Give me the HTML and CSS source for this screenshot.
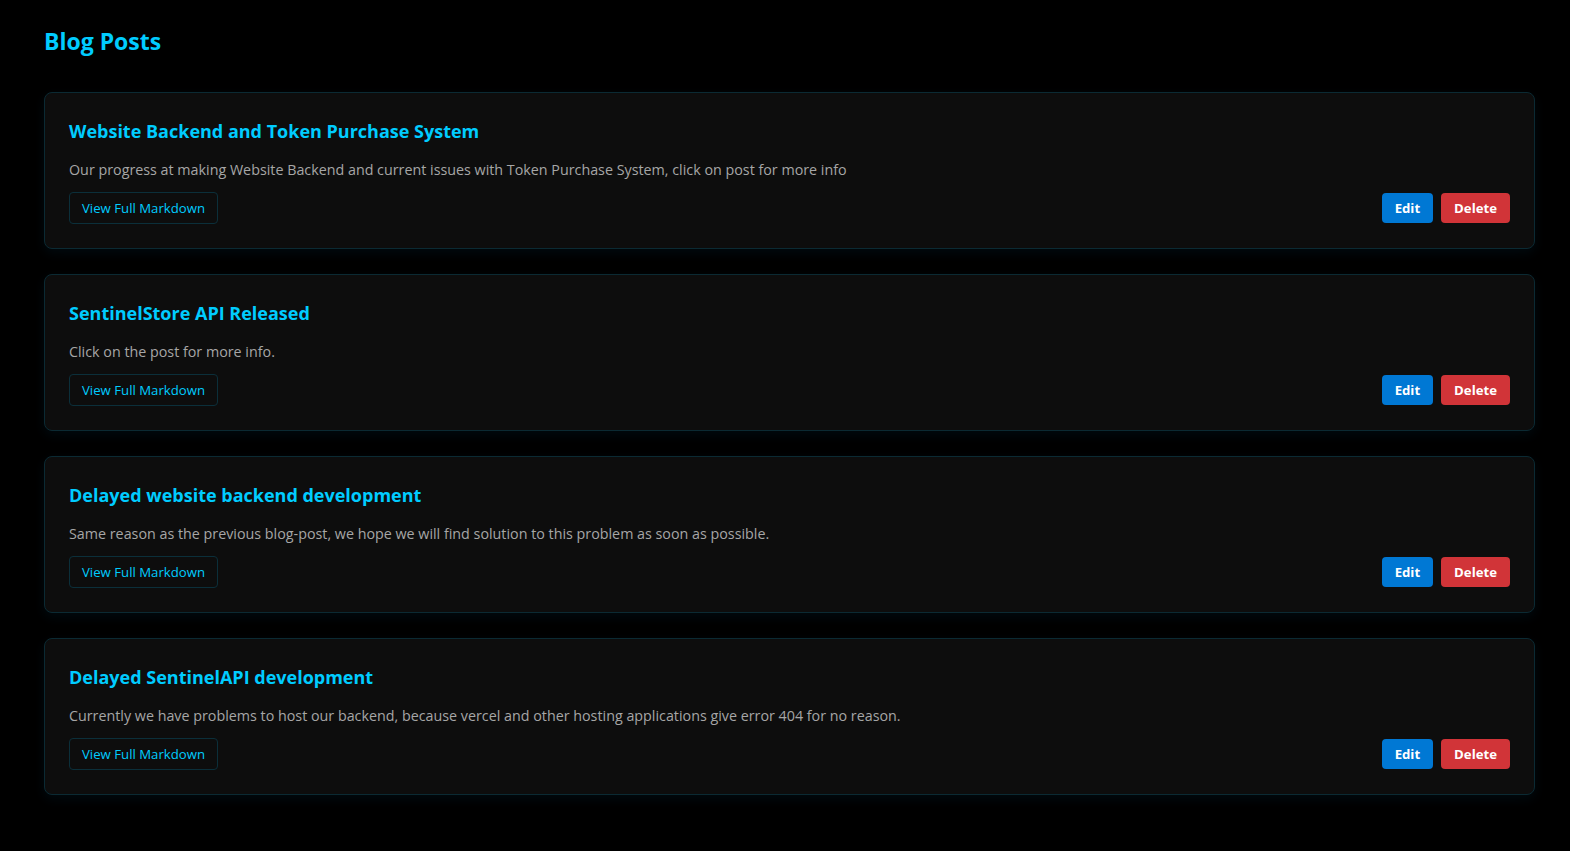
FILE: index.html
```html
<!DOCTYPE html>
<html lang="en">
<head>
<meta charset="utf-8">
<title>Blog Posts</title>
<link rel="stylesheet" href="styles.css">
</head>
<body>
<main class="page">
  <h1 class="page-title">Blog Posts</h1>
  <section class="posts">
    <article class="card">
      <h2 class="card-title">Website Backend and Token Purchase System</h2>
      <p class="card-desc">Our progress at making Website Backend and current issues with Token Purchase System, click on post for more info</p>
      <div class="card-actions">
        <button class="btn btn-outline">View Full Markdown</button>
        <div class="card-admin">
          <button class="btn btn-edit">Edit</button>
          <button class="btn btn-delete">Delete</button>
        </div>
      </div>
    </article>
    <article class="card">
      <h2 class="card-title">SentinelStore API Released</h2>
      <p class="card-desc">Click on the post for more info.</p>
      <div class="card-actions">
        <button class="btn btn-outline">View Full Markdown</button>
        <div class="card-admin">
          <button class="btn btn-edit">Edit</button>
          <button class="btn btn-delete">Delete</button>
        </div>
      </div>
    </article>
    <article class="card">
      <h2 class="card-title">Delayed website backend development</h2>
      <p class="card-desc">Same reason as the previous blog-post, we hope we will find solution to this problem as soon as possible.</p>
      <div class="card-actions">
        <button class="btn btn-outline">View Full Markdown</button>
        <div class="card-admin">
          <button class="btn btn-edit">Edit</button>
          <button class="btn btn-delete">Delete</button>
        </div>
      </div>
    </article>
    <article class="card">
      <h2 class="card-title">Delayed SentinelAPI development</h2>
      <p class="card-desc">Currently we have problems to host our backend, because vercel and other hosting applications give error 404 for no reason.</p>
      <div class="card-actions">
        <button class="btn btn-outline">View Full Markdown</button>
        <div class="card-admin">
          <button class="btn btn-edit">Edit</button>
          <button class="btn btn-delete">Delete</button>
        </div>
      </div>
    </article>
  </section>
</main>
</body>
</html>
```

FILE: styles.css
```css
* { box-sizing: border-box; }
html, body {
  margin: 0;
  background: #000;
}
body {
  font-family: "Open Sans", "Noto Sans", sans-serif;
  color: #aaa;
}
.page {
  padding: 25px 35px 40px 44px;
}
.page-title {
  margin: 0 0 35px;
  font-size: 23px;
  line-height: 32px;
  font-weight: 700;
  color: #00ccff;
}
.posts {
  display: flex;
  flex-direction: column;
  gap: 25px;
}
.card {
  background: #0d0d0d;
  border: 1px solid #0b2a33;
  border-radius: 8px;
  padding: 24px 24px 24px 24px;
  box-shadow: 0 4px 12px rgba(0, 40, 60, 0.25);
}
.card-title {
  margin: 0 0 13px;
  font-size: 18px;
  line-height: 28px;
  font-weight: 700;
  color: #00ccff;
}
.card-desc {
  margin: 0 0 10px;
  font-size: 14.3px;
  line-height: 24px;
  color: #a6a6a6;
}
.card-actions {
  display: flex;
  align-items: center;
  justify-content: space-between;
}
.card-admin {
  display: flex;
  gap: 8px;
}
.btn {
  font-family: inherit;
  cursor: pointer;
  border-radius: 4px;
  font-size: 13.2px;
}
.btn-outline {
  height: 32px;
  padding: 0 12px;
  background: transparent;
  border: 1px solid #0b2f3a;
  color: #00ccff;
}
.btn-edit, .btn-delete {
  height: 30px;
  border: none;
  color: #fff;
  font-weight: 700;
  padding: 0 13px;
}
.btn-edit { background: #0078d4; }
.btn-delete { background: #d13438; }
```
